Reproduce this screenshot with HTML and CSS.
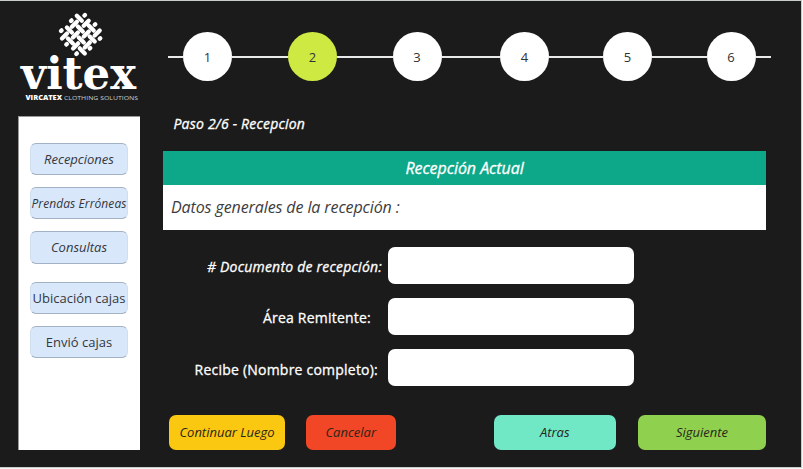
FILE: index.html
```html
<!DOCTYPE html>
<html lang="es">
<head>
<meta charset="utf-8">
<title>Vitex - Recepción</title>
<link rel="stylesheet" href="styles.css">
</head>
<body>
<div class="app">
  <aside class="side">
    <svg class="logo" width="122" height="115" viewBox="18 1 122 115" role="img" aria-label="vitex">
      <defs>
        <path id="d" d="M-2.500-2.500l5 5"/>
        <path id="u" d="M-2.500 2.500l5-5"/>
        <path id="o" d="M-.3.300l.6-.6"/>
      </defs>
      <g stroke="#fff" stroke-width="4.300" stroke-linecap="round">
        <use href="#d" x="79.300" y="18.200"/>
        <use href="#d" x="69.400" y="30.100"/><use href="#d" x="80.300" y="29.100"/><use href="#d" x="91.200" y="28.100"/>
        <use href="#d" x="70.400" y="41"/><use href="#d" x="81.300" y="40"/><use href="#d" x="92.200" y="39"/>
        <use href="#d" x="82.300" y="50.900"/>
        <use href="#u" x="74.400" y="24.200"/><use href="#u" x="86.200" y="23.200"/>
        <use href="#u" x="64.500" y="36"/><use href="#u" x="75.400" y="35"/><use href="#u" x="86.300" y="34"/><use href="#u" x="97.200" y="33"/>
        <use href="#u" x="75.600" y="45.900"/><use href="#u" x="87.300" y="44.900"/>
        <use href="#o" x="84.700" y="15.300"/><use href="#o" x="71.300" y="20.700"/><use href="#o" x="95" y="24.500"/><use href="#o" x="61.300" y="30.700"/>
        <use href="#o" x="76.600" y="53.700"/><use href="#o" x="90" y="48.300"/><use href="#o" x="66.600" y="44.300"/><use href="#o" x="100" y="38.500"/>
      </g>
      <text class="brand" x="21" y="89" textLength="115" lengthAdjust="spacingAndGlyphs">vitex</text>
      <text class="tag tag-bold" x="25.500" y="99.500" textLength="36.500" lengthAdjust="spacingAndGlyphs">VIRCATEX</text>
      <text class="tag" x="64" y="99.500" textLength="74" lengthAdjust="spacingAndGlyphs">CLOTHING SOLUTIONS</text>
    </svg>
    <nav class="menu">
      <button class="link it">Recepciones</button>
      <button class="link it tight">Prendas Erróneas</button>
      <button class="link it">Consultas</button>
      <button class="link boxes">Ubicación cajas</button>
      <button class="link">Envió cajas</button>
    </nav>
  </aside>
  <main class="main">
    <div class="steps">
      <i class="line"></i><span class="step">1</span>
      <i class="line"></i><span class="step on">2</span>
      <i class="line"></i><span class="step">3</span>
      <i class="line"></i><span class="step">4</span>
      <i class="line"></i><span class="step">5</span>
      <i class="line"></i><span class="step">6</span>
      <i class="line"></i>
    </div>
    <p class="crumb">Paso 2/6 - Recepcion</p>
    <h1 class="title">Recepción Actual</h1>
    <p class="subtitle">Datos generales de la recepción :</p>
    <form class="form">
      <label class="label it" for="doc"># Documento de recepción:</label><input class="field" id="doc">
      <label class="label area" for="area">Área Remitente:</label><input class="field" id="area">
      <label class="label name" for="name">Recibe (Nombre completo):</label><input class="field" id="name">
    </form>
    <div class="actions">
      <button class="btn later">Continuar Luego</button>
      <button class="btn cancel">Cancelar</button>
      <button class="btn back">Atras</button>
      <button class="btn next">Siguiente</button>
    </div>
  </main>
</div>
</body>
</html>
```
FILE: styles.css
```css
* { box-sizing: border-box; }
body { margin: 0; height: 469px; overflow: hidden; background: #f4f5f5; font-family: "Open Sans", sans-serif; font-size: 13px; color: #333; }
.app { display: flex; width: 802px; height: 468px; padding-left: 18px; background: #1b1b1b; border: solid #c8cccc; border-width: 1px 1px 1px 0; }
.side { width: 122px; margin-right: 23px; }
.logo { display: block; }
.brand { font: 700 44px "DejaVu Serif", serif; fill: #fff; }
.tag { font: 400 6px "Open Sans", sans-serif; fill: #ccc; }
.tag-bold { font-weight: 800; fill: #fff; }
.menu { display: flex; flex-direction: column; gap: 12px; height: 334px; padding: 26px 0 0 11px; background: #fff; border: solid #999; border-width: 1px 0 0 1px; }
.link { width: 98px; height: 32.2px; flex: none; padding: 0; border: 1px solid #a3b1c4; border-left-color: #d1def0; border-right-color: #d1def0; border-radius: 6px; background: #d9e7fa; font: 13px "Open Sans", sans-serif; color: #34383e; white-space: nowrap; }
.it { font-style: italic; }
.tight { font-size: 12px; letter-spacing: 0.08px; }
.boxes { margin-top: 6px; }
.main { width: 603px; display: flex; flex-direction: column; }
.steps { display: grid; grid-template-columns: 15px 49px 56px 49px 55.5px 49px 58.5px 49px 54px 49px 54.5px 49px 15.5px; align-items: center; height: 49px; margin: 31px 0 0 5px; }
.line { height: 2px; background: #e8eaea; }
.step { height: 49px; border-radius: 50%; background: #fff; display: grid; place-items: center; }
.on { background: #cfe943; }
.crumb, .title, .label { color: #fff; -webkit-text-stroke: 0.3px #fff; }
.crumb { margin: 0; height: 70px; padding: 33px 0 0 10.5px; font-size: 14px; line-height: 20px; font-style: italic; letter-spacing: 0.2px; }
.title { margin: 0; height: 34px; background: #0da789; font-size: 16px; font-style: italic; font-weight: 400; line-height: 34px; text-align: center; letter-spacing: -0.05px; }
.subtitle { margin: 0; height: 45px; padding-left: 8px; background: #fff; font-size: 16px; font-style: italic; line-height: 45px; letter-spacing: -0.1px; color: #3c3c3c; }
.form { display: grid; grid-template-columns: 219px 246px; grid-template-rows: repeat(3, 37.5px); column-gap: 6px; row-gap: 13.5px; align-items: center; margin-top: 16.5px; }
.label { text-align: right; font-size: 14px; letter-spacing: 0.22px; white-space: nowrap; padding-top: 3px; }
.area { padding-right: 11px; }
.name { padding: 4px 4px 0 0; }
.field { width: 246px; height: 37.5px; border: 0; border-radius: 7px; background: #fff; padding: 0 10px; }
.actions { display: flex; margin: 28.5px 0 0 6px; }
.btn { height: 35.5px; padding: 0 0 0; border: 0; border-radius: 7px; font: italic 13px "Open Sans", sans-serif; color: #2a2518; }
.later { width: 116px; background: #fac711; }
.cancel { width: 89.5px; margin-left: 21px; background: #f24726; }
.back { width: 122.5px; margin-left: 98px; background: #70e7c5; }
.next { width: 128px; margin-left: 22px; background: #8fd14f; }
```
